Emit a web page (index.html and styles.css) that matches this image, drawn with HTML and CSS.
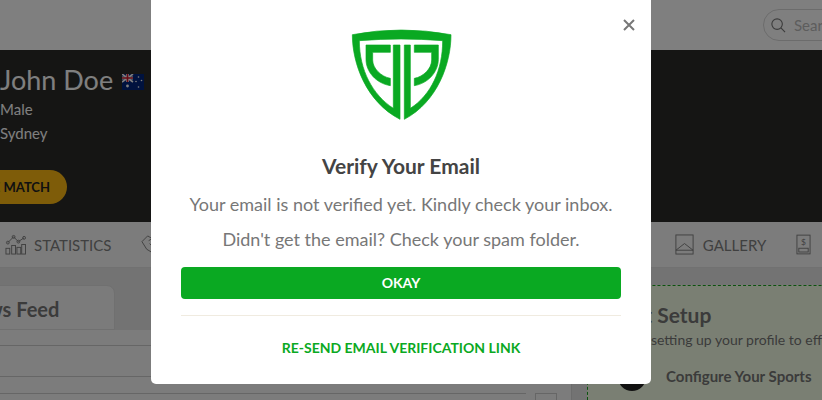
FILE: index.html
```html
<!DOCTYPE html>
<html>
<head>
    <title>Profile</title>
    <link rel="stylesheet" href="styles.css">
</head>
<body>
    <!-- the page behind the dialog -->
    <div class="topbar">
        <div class="search">
            <svg class="search-icon" viewBox="0 0 16 16"><circle cx="6.5" cy="6.5" r="5.6"/><path d="M10.6 10.6 15 15"/></svg>
            <span>Search</span>
        </div>
    </div>

    <div class="banner">
        <h1 class="name">John Doe
            <svg class="flag" viewBox="0 0 22 16">
                <rect width="22" height="16" fill="#00247d"/>
                <path d="M0 0 11 8M11 0 0 8" stroke="#fff" stroke-width="1.6"/>
                <path d="M5.5 0V8M0 4H11" stroke="#fff" stroke-width="2.8"/>
                <path d="M5.5 0V8M0 4H11" stroke="#cf142b" stroke-width="1.6"/>
                <circle cx="5.5" cy="12" r="1.4" fill="#fff"/>
                <circle cx="16.5" cy="3" r=".8" fill="#fff"/>
                <circle cx="19.5" cy="6.5" r=".8" fill="#fff"/>
                <circle cx="14" cy="7.5" r=".8" fill="#fff"/>
                <circle cx="16.5" cy="13" r=".8" fill="#fff"/>
            </svg>
        </h1>
        <p class="info">Male</p>
        <p class="info">Sydney</p>
        <a class="match" href="#">INVITE MATCH</a>
    </div>

    <div class="tabs">
        <a class="tab" href="#">
            <svg class="tab-icon" viewBox="0 0 22 22"><rect x="1" y="15" width="4" height="6"/><rect x="7" y="12" width="4" height="9"/><rect x="12.500" y="14" width="4" height="7"/><rect x="17.500" y="11" width="4" height="10"/><path d="M3 9 9 3l5 5 6-4"/><circle cx="3" cy="9" r="1.500"/><circle cx="9" cy="3" r="1.500"/><circle cx="14" cy="8" r="1.500"/><circle cx="20" cy="4" r="1.500"/></svg>
            STATISTICS
        </a>
        <a class="tab tab-wide" href="#">
            <svg class="tab-icon" viewBox="0 0 22 22"><path d="M1 8 7 2l5 3 4 7-5 7-5-3zM8 7l5-3 7 6-6 8M9 10l5 5"/></svg>
            CONNECTIONS
        </a>
        <a class="tab" href="#">
            <svg class="tab-icon" viewBox="0 0 22 22"><rect x="2" y="1" width="18" height="20"/><path d="M2 17 11 10l9 7M2 17H20"/></svg>
            GALLERY
        </a>
        <a class="tab" href="#">
            <svg class="tab-icon tab-icon-narrow" viewBox="0 0 16 22"><rect x="1" y="1" width="14" height="20"/><rect x="3" y="15" width="10" height="4"/><text x="8" y="12" class="dollar">$</text></svg>
            PAYMENTS
        </a>
    </div>

    <div class="content">
        <div class="feed">
            <div class="feed-tab">News Feed</div>
            <div class="feed-panel">
                <div class="feed-line"></div>
                <div class="feed-line feed-line2"></div>
                <div class="feed-input">
                    <div class="feed-box"></div>
                </div>
            </div>
        </div>
        <div class="setup">
            <h2 class="setup-title">Get Setup</h2>
            <p class="setup-text">Start setting up your profile to effectively use</p>
            <div class="setup-step"><span class="dot"></span>Configure Your Sports</div>
        </div>
    </div>

    <!-- the dialog -->
    <div class="overlay"></div>
    <div class="modal">
        <a class="close" href="#"><svg class="close-icon" viewBox="0 0 12 12"><path d="M1 1 11 11M11 1 1 11"/></svg></a>
        <svg class="logo" viewBox="0 0 420 330">
            <path d="M64 44Q210 16 360 44C360 130 320 245 220 298V75H238V265C300 225 335 150 335 62Q210 52 85 62C85 150 125 225 187 265V75H207V298C105 245 64 130 64 44Z"/>
            <path d="M105 75H178V97H125V120C125 145 150 170 178 175V197C135 190 105 155 105 118Z"/>
            <path d="M322 75H250V97H302V120C302 145 278 170 250 175V197C292 190 322 155 322 118Z"/>
        </svg>
        <h2 class="modal-title">Verify Your Email</h2>
        <p class="modal-text">Your email is not verified yet. Kindly check your inbox.</p>
        <p class="modal-text">Didn't get the email? Check your spam folder.</p>
        <a class="okay" href="#">OKAY</a>
        <hr class="divider">
        <a class="resend" href="#">RE-SEND EMAIL VERIFICATION LINK</a>
    </div>
</body>
</html>
```

FILE: styles.css
```css
/* Page */
body {
    font-family: Lato, sans-serif;
    margin: 0;
    height: 400px;
    overflow: hidden;
    background: white;
}

/* Top bar */
.topbar {
    height: 50px;
    display: flex;
    align-items: center;
    padding-left: 763px;
    background: white;
}
.search {
    flex: none;
    width: 120px;
    height: 32px;
    box-sizing: border-box;
    display: flex;
    align-items: center;
    gap: 8px;
    padding-left: 7px;
    border: 1px solid #d8d8d8;
    border-radius: 16px;
    font-size: 15px;
    color: #bbb;
}
.search-icon {
    width: 15px;
    height: 15px;
    fill: none;
    stroke: #777;
    stroke-width: 1.2;
}

/* Dark banner */
.banner {
    height: 172px;
    box-sizing: border-box;
    padding-top: 13px;
    background: #2b2a29;
    color: white;
}
.name {
    margin: 0;
    font-size: 27px;
    font-weight: 400;
    line-height: 34px;
}
.flag {
    width: 22px;
    height: 16px;
    margin-left: 2px;
}
.info {
    margin: 0;
    font-size: 15px;
    line-height: 24px;
}
.match {
    display: block;
    width: 150px;
    height: 34px;
    box-sizing: border-box;
    margin: 25px 0 0 -83px;
    padding-right: 17px;
    border-radius: 17px;
    background: #fdb913;
    color: #222;
    font-size: 13px;
    font-weight: 700;
    line-height: 34px;
    text-align: right;
    text-decoration: none;
}

/* Tabs */
.tabs {
    width: 900px;
    height: 46px;
    box-sizing: border-box;
    display: flex;
    align-items: center;
    gap: 30px;
    padding-left: 5px;
    background: #f9f9f9;
    border-bottom: 1px solid #e2e2e2;
}
.tab {
    flex: none;
    display: flex;
    align-items: center;
    gap: 8px;
    font-size: 15px;
    color: #808080;
    text-decoration: none;
}
.tab-wide {
    flex: 1;
}
.tab-icon {
    width: 21px;
    height: 21px;
    fill: none;
    stroke: #808080;
    stroke-width: 1;
}
.tab-icon-narrow {
    width: 15px;
    margin-right: 3px;
}
.dollar {
    font-size: 9px;
    text-anchor: middle;
    fill: #808080;
    stroke: none;
}

/* Content under the tabs */
.content {
    display: flex;
    gap: 15px;
    height: 132px;
    background: #e6e6e6;
}
.feed {
    flex: none;
    width: 572px;
    padding-top: 17px;
    box-sizing: border-box;
    border-right: 1px solid #d8d8d8;
    overflow: hidden;
}
.feed-tab {
    width: 170px;
    height: 45px;
    margin-left: -55px;
    box-sizing: border-box;
    padding-left: 15px;
    background: #f6f6f6;
    border: 1px solid #e0e0e0;
    border-radius: 0 8px 0 0;
    font-size: 20px;
    font-weight: 700;
    line-height: 46px;
    color: #777;
}
.feed-panel {
    height: 70px;
    padding-top: 15px;
    background: #f9f9f9;
}
.feed-line {
    height: 30px;
    border-top: 1px solid #ccc;
}
.feed-line2 {
    height: 16px;
}
.feed-input {
    width: 526px;
    border-top: 1px solid #ccc;
    position: relative;
}
.feed-box {
    position: absolute;
    left: 535px;
    top: -1px;
    width: 20px;
    height: 20px;
    border: 1px solid #ccc;
}
.setup {
    flex: none;
    width: 300px;
    box-sizing: border-box;
    margin-top: 17px;
    padding: 15px 0 0 30px;
    background: #f5ffe6;
    border-top: 1px dashed #19a51f;
    border-left: 1px dashed #19a51f;
    white-space: nowrap;
    color: #777;
}
.setup-title {
    margin: 0;
    font-size: 21px;
    line-height: 28px;
}
.setup-text {
    margin: 1px 0 0;
    font-size: 14px;
    line-height: 20px;
}
.setup-step {
    display: flex;
    gap: 20px;
    margin-top: 13px;
    font-size: 15px;
    font-weight: 700;
    line-height: 26px;
}
.dot {
    width: 28px;
    height: 28px;
    border-radius: 50%;
    background: #222;
}

/* Dialog */
.overlay {
    position: fixed;
    inset: 0;
    background: rgba(0, 0, 0, 0.5);
}
.modal {
    position: fixed;
    left: 151px;
    top: -10px;
    width: 500px;
    height: 394px;
    box-sizing: border-box;
    padding: 40px 30px 0;
    background: white;
    border-radius: 5px;
    text-align: center;
}
.close {
    position: absolute;
    right: 16px;
    top: 29px;
}
.close-icon {
    display: block;
    width: 12px;
    height: 12px;
    stroke: #777;
    stroke-width: 2;
}
.logo {
    display: block;
    width: 140px;
    height: 110px;
    margin: -10px auto 0;
    fill: #0aa922;
    stroke: #0aa922;
    stroke-width: 2;
}
.modal-title {
    margin: 22px 0 12px;
    font-size: 21px;
    font-weight: 700;
    line-height: 28px;
    color: #444;
}
.modal-text {
    margin: 0 0 11px;
    font-size: 18px;
    line-height: 24px;
    color: #777;
}
.okay {
    display: block;
    height: 32px;
    margin-top: 16px;
    border-radius: 4px;
    background: #0aa922;
    color: white;
    font-size: 14px;
    font-weight: 700;
    line-height: 32px;
    text-decoration: none;
}
.divider {
    margin: 16px 0 0;
    border: 0;
    border-top: 1px solid #f0ebe0;
}
.resend {
    display: block;
    margin-top: 22px;
    color: #0aa922;
    font-size: 14px;
    font-weight: 700;
    line-height: 20px;
    text-decoration: none;
}
```
